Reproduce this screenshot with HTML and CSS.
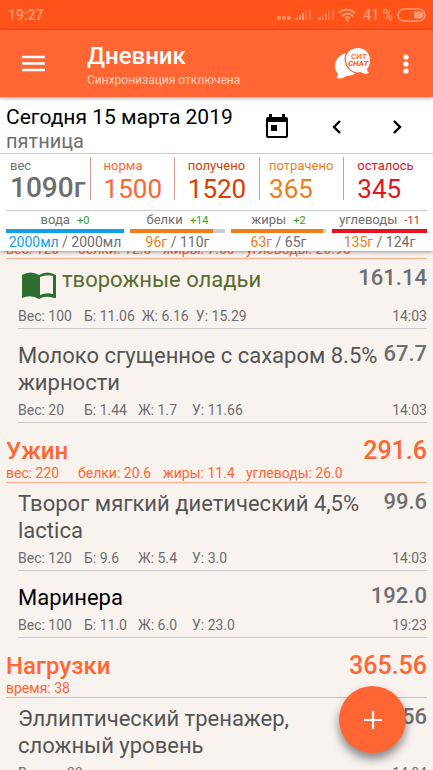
FILE: index.html
```html
<!DOCTYPE html>
<html lang="ru">
<head>
<meta charset="utf-8">
<meta name="viewport" content="width=device-width, initial-scale=1">
<title>Дневник</title>
<link rel="stylesheet" href="styles.css">
</head>
<body>
<div class="status">
  <span>19:27</span>
  <div class="status-icons">
    <svg width="80" height="16" viewBox="0 0 80 16" fill="currentColor" aria-hidden="true">
      <circle cx="4" cy="11" r="2"/><circle cx="9" cy="11" r="2"/><circle cx="14" cy="11" r="2"/>
      <path d="M20 13v-2l3-1v3zM24 13V8h2v5zM27 13V6h2v7z"/>
      <path d="M30 13V4h2v9zM34 13V2h2v11z" opacity=".5"/>
      <path d="M43 13v-2l3-1v3z"/>
      <path d="M47 13V8h2v5zM50 13V6h2v7zM53 13V4h2v9zM57 13V2h2v11z" opacity=".5"/>
      <g fill="none" stroke="currentColor" stroke-width="2"><path d="M64 6q8-7 16 0M67 9q6-5 11 0M70 11q3-2 5 0"/></g>
      <circle cx="72.500" cy="13" r="1.500"/>
    </svg>
    <span class="charge">41 %</span>
    <svg width="29" height="14" viewBox="0 0 29 14" aria-hidden="true"><rect x="1" y="1" width="27" height="12" rx="6" fill="none" stroke="currentColor" stroke-width="1.500"/><path d="M17 3.500h6a3.500 3.500 0 0 1 0 7h-6z" fill="currentColor"/></svg>
  </div>
</div>

<header class="appbar">
  <button class="icon-btn" aria-label="Меню"><svg width="24" height="18" viewBox="0 0 24 18"><path d="M0 2h23M0 8.500h23M0 15h23" stroke="#fff" stroke-width="2.300"/></svg></button>
  <div class="heading">
    <h1>Дневник</h1>
    <p>Синхронизация отключена</p>
  </div>
  <button class="icon-btn" aria-label="Чат">
    <svg width="36" height="32" viewBox="0 0 36 32">
      <path d="M11 5C4 7 0 12 0 18c0 3 1 6 3 8 0 2-1 3-2 4 4 1 8 0 10-2 4 0 7-1 10-3C13 23 8 15 11 5z" fill="#fff"/>
      <path d="M23 0c7 0 12 5 12 12 0 4-1 7-3 9 0 2 1 3 2 4-3 1-6 1-8-1C17 26 10 20 10 12 10 5 16 0 23 0z" fill="#fff"/>
      <path d="M12 4c-4 8-1 18 9 21" fill="none" stroke="#f63" stroke-width="1.300"/>
      <text x="16" y="10.500" class="chat-top">СИТ</text>
      <text x="13" y="18" class="chat-bottom">CHAT</text>
    </svg>
  </button>
  <button class="icon-btn more" aria-label="Ещё"><svg width="6" height="20" viewBox="0 0 6 20" fill="#fff"><circle cx="3" cy="3" r="2.600"/><circle cx="3" cy="10" r="2.600"/><circle cx="3" cy="17" r="2.600"/></svg></button>
</header>

<section class="summary">
  <div class="day">
    <div class="day-text">
      <div class="date">Сегодня 15 марта 2019</div>
      <div class="weekday">пятница</div>
    </div>
    <button class="icon-btn" aria-label="Календарь"><svg width="22" height="25" viewBox="0 0 22 25"><path fill-rule="evenodd" d="M3 0h3v3h10V0h3v3h1q2 0 2 2v17q0 2-2 2H2q-2 0-2-2V5q0-2 2-2h1zM2 8v14h18V8zM5 11h6v6H5z"/></svg></button>
    <button class="icon-btn" aria-label="Предыдущий день"><svg width="10" height="14" viewBox="0 0 10 14"><path d="M8 1L2 7l6 6" fill="none" stroke="#000" stroke-width="2.400"/></svg></button>
    <button class="icon-btn" aria-label="Следующий день"><svg width="10" height="14" viewBox="0 0 10 14"><path d="M2 1l6 6-6 6" fill="none" stroke="#000" stroke-width="2.400"/></svg></button>
  </div>

  <div class="stats">
    <div class="stat weight"><div>вес<b>1090г</b></div></div>
    <div class="stat norm"><div>норма<b>1500</b></div></div>
    <div class="stat eaten"><div>получено<b>1520</b></div></div>
    <div class="stat spent"><div>потрачено<b>365</b></div></div>
    <div class="stat left"><div>осталось<b>345</b></div></div>
  </div>

  <div class="macros">
    <div class="macro water"><div class="name">вода <small>+0</small></div><div class="bar"><div class="fill" style="width:100%"></div></div><div class="amount"><em>2000мл</em> / 2000мл</div></div>
    <div class="macro"><div class="name">белки <small>+14</small></div><div class="bar"><div class="fill" style="width:87%"></div></div><div class="amount"><em>96г</em> / 110г</div></div>
    <div class="macro"><div class="name">жиры <small>+2</small></div><div class="bar"><div class="fill" style="width:97%"></div></div><div class="amount"><em>63г</em> / 65г</div></div>
    <div class="macro over"><div class="name">углеводы <small>-11</small></div><div class="bar"><div class="fill" style="width:100%"></div></div><div class="amount"><em>135г</em> / 124г</div></div>
  </div>
</section>

<main class="diary">
  <div class="meal">
    <div class="meal-meta"><span>вес: 120</span><span>белки: 12.5</span><span>жиры: 7.60</span><span>углеводы: 20.95</span></div>
  </div>
  <article class="item recipe">
    <div class="line">
      <svg class="book" width="34" height="27" viewBox="0 0 34 27"><path fill-rule="evenodd" fill="#2e6e2e" d="M0 3Q9-2 17 3q8-5 17 0v23h-2q-8-3-15 1Q9 22 0 26zM18 5v18q7-3 13-1V4q-6-2-13 1z"/></svg>
      <h3>творожные оладьи</h3><b>161.14</b>
    </div>
    <div class="meta"><span>Вес: 100</span><span>Б: 11.06</span><span>Ж: 6.16</span><span>У: 15.29</span><time>14:03</time></div>
  </article>
  <article class="item">
    <div class="line"><h3>Молоко сгущенное с сахаром 8.5% жирности</h3><b>67.7</b></div>
    <div class="meta"><span>Вес: 20</span><span>Б: 1.44</span><span>Ж: 1.7</span><span>У: 11.66</span><time>14:03</time></div>
  </article>

  <div class="meal">
    <div class="meal-line"><h2>Ужин</h2><b>291.6</b></div>
    <div class="meal-meta"><span>вес: 220</span><span>белки: 20.6</span><span>жиры: 11.4</span><span>углеводы: 26.0</span></div>
  </div>
  <article class="item">
    <div class="line"><h3>Творог мягкий диетический 4,5% lactica</h3><b>99.6</b></div>
    <div class="meta"><span>Вес: 120</span><span>Б: 9.6</span><span>Ж: 5.4</span><span>У: 3.0</span><time>14:03</time></div>
  </article>
  <article class="item own">
    <div class="line"><h3>Маринера</h3><b>192.0</b></div>
    <div class="meta"><span>Вес: 100</span><span>Б: 11.0</span><span>Ж: 6.0</span><span>У: 23.0</span><time>19:23</time></div>
  </article>

  <div class="meal">
    <div class="meal-line"><h2>Нагрузки</h2><b>365.56</b></div>
    <div class="meal-meta"><span>время: 38</span></div>
  </div>
  <article class="item">
    <div class="line"><h3>Эллиптический тренажер, сложный уровень</h3><b>365.56</b></div>
    <div class="meta"><span>Время: 38</span><time>14:04</time></div>
  </article>
</main>

<button class="fab" aria-label="Добавить"><svg width="18" height="18" viewBox="0 0 18 18"><path d="M9 0v18M0 9h18" stroke="#fff" stroke-width="2.200"/></svg></button>
</body>
</html>
```
FILE: styles.css
```css
* { box-sizing: border-box; }

body {
  margin: 0;
  height: 100vh;
  overflow: hidden;
  display: flex;
  flex-direction: column;
  background: #f8f3ef;
  color: #6e6e6e;
  font-family: Roboto, "Noto Sans", sans-serif;
}

h1, h2, h3, p { margin: 0; font-weight: 400; }
b { font-weight: 400; }
svg { display: block; flex: none; }

.icon-btn {
  display: flex;
  align-items: center;
  justify-content: center;
  padding: 0;
  border: 0;
  background: none;
  color: #000;
}

.status {
  flex: none;
  display: flex;
  align-items: center;
  justify-content: space-between;
  height: 30px;
  padding: 0 7px 0 8px;
  background: #ff5319;
  color: #ff9875;
  font-size: 14px;
  font-weight: 500;
}
.status-icons { display: flex; align-items: center; gap: 4px; }
.charge { margin-left: 4px; }

.appbar {
  position: relative;
  z-index: 3;
  flex: none;
  display: flex;
  align-items: center;
  height: 67px;
  padding: 0 24px 0 22px;
  background: #ff6633;
  box-shadow: 0 1px 4px rgba(0, 0, 0, .4);
  color: #fff;
}
.heading { flex: 1; padding-left: 41px; }
.heading h1 { font-size: 24px; line-height: 32px; font-weight: 500; }
.heading p { font-size: 12px; line-height: 16px; color: #ffd0bf; }
.more { margin-left: 32px; }
.chat-top { font: 500 8px Roboto, sans-serif; fill: #ff6633; }
.chat-bottom { font: italic 900 8px Roboto, sans-serif; fill: #ff6633; }

.summary {
  position: relative;
  z-index: 2;
  flex: none;
  background: #fff;
  box-shadow: 0 1px 4px rgba(0, 0, 0, .4);
}
.day {
  display: flex;
  align-items: center;
  padding: 7px 31px 0 6px;
  border-bottom: 1px solid #ccc;
}
.day-text { flex: 1; }
.day .icon-btn { margin-bottom: 4px; }
.day .icon-btn + .icon-btn { margin-left: 44px; }
.day .icon-btn:last-child { margin-left: 50px; }
.date { color: #000; font-size: 21px; line-height: 26px; }
.weekday { font-size: 20px; line-height: 23px; }

.stats {
  display: grid;
  grid-template-columns: repeat(5, 1fr);
  margin: 0 6px;
  padding: 3px 0 10px;
  border-bottom: 1px solid #ccc;
}
.stat {
  display: flex;
  justify-content: center;
  font-size: 13px;
  line-height: 18px;
}
.stat + .stat { border-left: 1px solid #d99a8c; }
.stat b { display: block; margin-top: 3px; font-size: 26px; line-height: 22px; }
.weight { justify-content: flex-start; padding-left: 4px; }
.weight b { margin-top: 2px; font-size: 28px; font-weight: 500; }
.norm { color: #ff6633; }
.eaten { color: #dd3c00; }
.spent { color: #ee7d1a; }
.left { color: #e3141e; }

.macros {
  display: grid;
  grid-template-columns: 118fr 95fr 95fr 95fr;
  gap: 6px;
  margin: 0 6px;
  text-align: center;
  white-space: nowrap;
}
.name { font-size: 13px; line-height: 17px; }
.name small { margin-left: 4px; font-size: 11px; color: #36a018; }
.bar { height: 4px; background: #ccc; }
.fill { height: 4px; background: #ee7d1a; }
.amount { font-size: 14px; line-height: 18px; }
.amount em { font-style: normal; color: #ee7d1a; }
.water .fill { background: #12a0e6; }
.water em { color: #12a0e6; }
.over .fill { background: #e3141e; }
.over small { color: #e3141e; }

.diary { flex: 1; min-height: 0; margin-top: -10px; }

.meal {
  margin: 0 6px;
  border-bottom: 1px solid #ffab91;
  color: #ff6633;
}
.meal-line {
  display: flex;
  justify-content: space-between;
  padding-top: 14px;
  line-height: 28px;
}
.meal-line h2 { font-size: 24px; font-weight: 500; }
.meal-line b { font-size: 25px; font-weight: 500; }
.meal-meta {
  display: grid;
  grid-template-columns: 72px 85px 83px 1fr;
  font-size: 14px;
  line-height: 17px;
  white-space: nowrap;
}

.item {
  margin: 0 6px 0 18px;
  padding-top: 13px;
  border-bottom: 1px solid #ccc;
}
.meal + .item { padding-top: 7px; }
.line { display: flex; gap: 4px; }
.line h3 {
  flex: 1;
  color: #555;
  font-size: 22px;
  line-height: 27px;
}
.line b { font-size: 22px; line-height: 24px; font-weight: 500; }
.own h3 { color: #000; }
.recipe .line { min-height: 36px; padding-left: 4px; gap: 6px; }
.recipe h3 { color: #5a6b2f; }
.book { margin-top: 6px; }

.meta {
  display: flex;
  margin-top: 4px;
  padding-bottom: 2px;
  font-size: 14px;
  line-height: 20px;
}
.meta span { min-width: 54px; padding-right: 7px; }
.meta span:first-child { min-width: 66px; }
.meta time { margin-left: auto; }

.fab {
  position: fixed;
  right: 27px;
  bottom: 17px;
  z-index: 4;
  display: flex;
  align-items: center;
  justify-content: center;
  width: 67px;
  height: 67px;
  padding: 0;
  border: 0;
  border-radius: 50%;
  background: #ff6633;
  box-shadow: 0 6px 10px rgba(0, 0, 0, .45);
}
```
